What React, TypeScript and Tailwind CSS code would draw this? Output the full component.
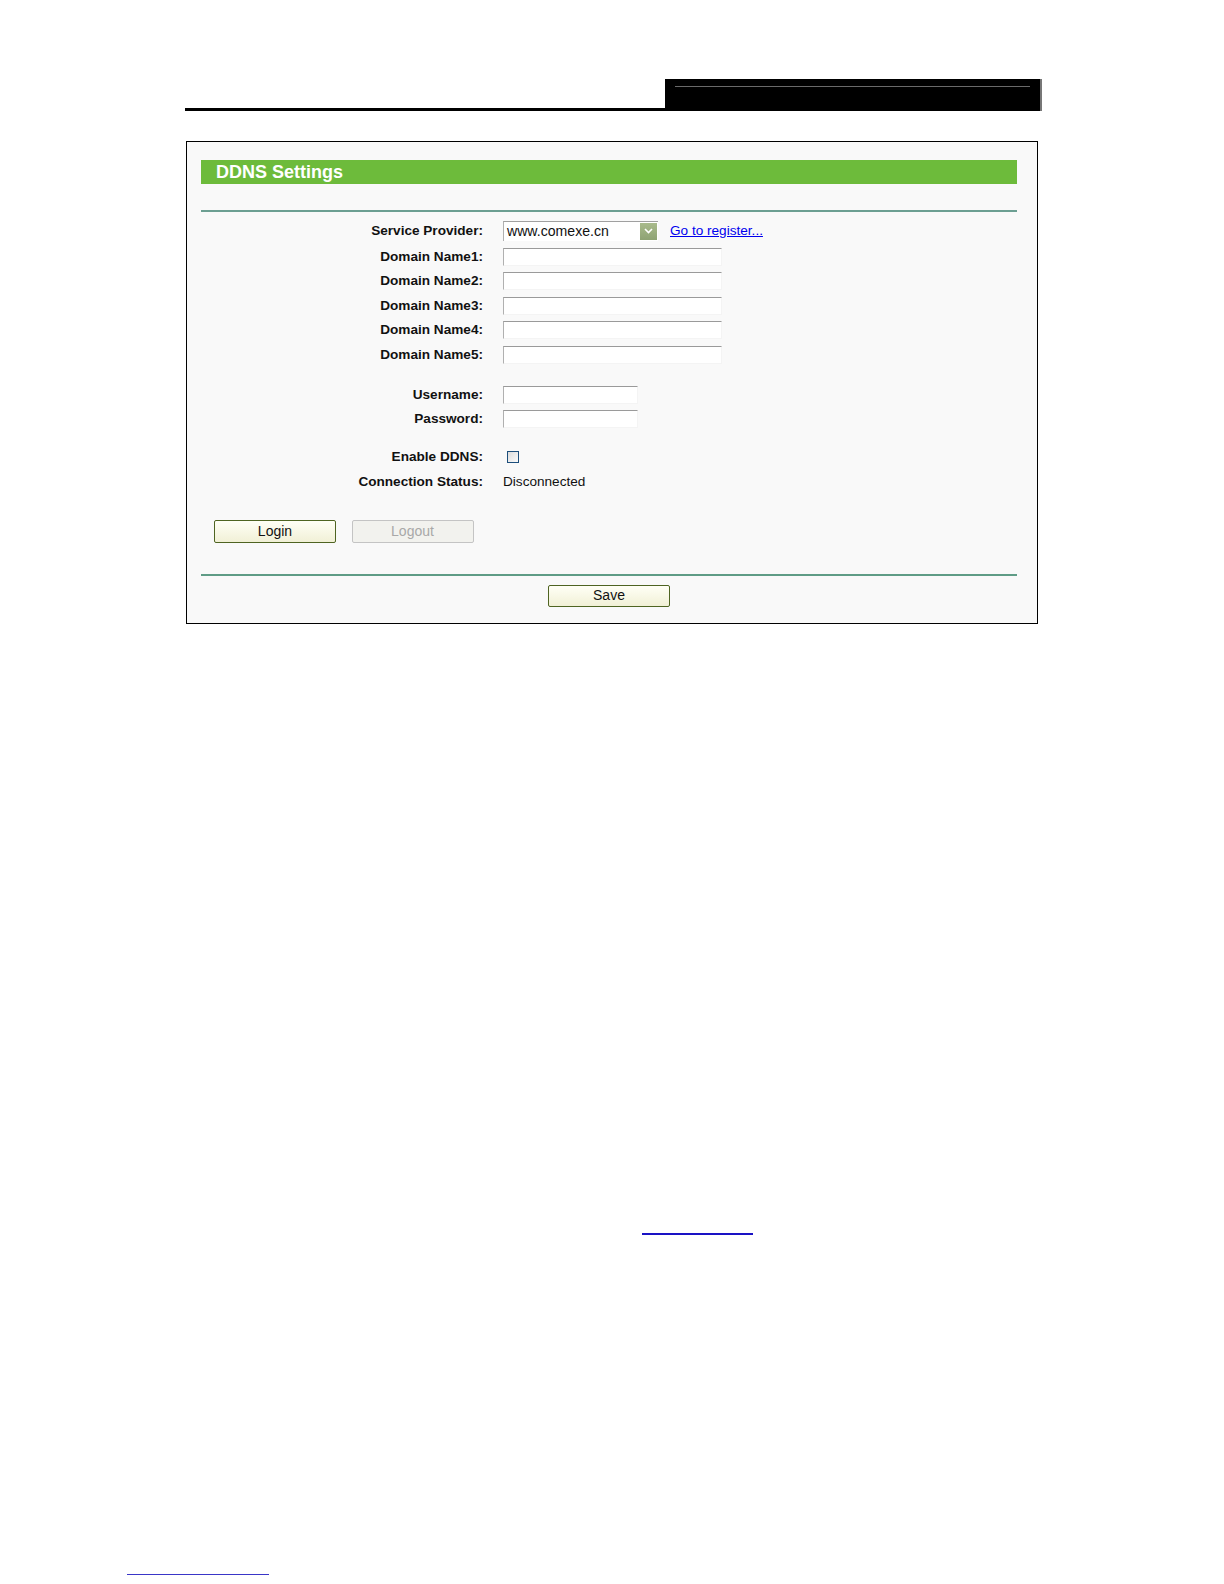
import React from 'react';

const font = { fontFamily: '"Liberation Sans", Arial, sans-serif' };

const Row: React.FC<{ label: string; children?: React.ReactNode; tall?: boolean }> = ({ label, children, tall }) => (
  <div className={`flex items-center ${tall ? 'h-[27px]' : 'h-[24.5px]'}`}>
    <div className="w-[282px] shrink-0 text-right text-[13.6px] font-bold text-[#111]">{label}</div>
    <div className="ml-[20px] flex items-center">{children}</div>
  </div>
);

const TextBox: React.FC<{ w: string }> = ({ w }) => (
  <div className={`${w} h-[18px] border-t border-l border-t-[#9a9a9a] border-l-[#b0b0b0] border-r border-b border-r-[#f4f4f4] border-b-[#f4f4f4] bg-white`} />
);

const Btn: React.FC<{ label: string; disabled?: boolean }> = ({ label, disabled }) =>
  disabled ? (
    <div className="w-[122px] h-[22.5px] flex items-center justify-center rounded-[2px] border border-[#c4c4c4] bg-[#f2f2ee] text-[14px] text-[#a8a8a8]">
      {label}
    </div>
  ) : (
    <div className="w-[122px] h-[22.5px] flex items-center justify-center rounded-[2px] border border-[#4f6422] bg-gradient-to-b from-[#fffff6] to-[#f1f0d6] text-[14px] text-[#111]">
      {label}
    </div>
  );

const App: React.FC = () => {
  return (
    <div className="w-[1224px] h-[1584px] bg-white overflow-hidden" style={font}>
      {/* page header */}
      <div className="ml-[185px] mt-[79px] w-[857px] flex items-end">
        <div className="flex-1 h-[3px] bg-black" />
        <div className="w-[377px] h-[32px] bg-black border-r-2 border-r-[#777] pt-[7px] px-[10px]">
          <div className="h-[1px] bg-[#6a6a6a]" />
        </div>
      </div>

      {/* DDNS panel */}
      <div className="ml-[186px] mt-[30px] w-[852px] border border-black bg-[#f9f9f9] pl-[14px] pr-[20px] pt-[18px] pb-[16px]">
        <div className="h-[24px] bg-[#6dbb3b] flex items-center pl-[15px] text-[18px] font-bold text-white">DDNS Settings</div>
        <div className="mt-[26px] h-[2px] bg-[#6c9f92]" />

        <div className="mt-[5.5px]">
          <Row label="Service Provider:" tall>
            <div className="w-[155px] h-[20px] flex items-center border-t border-l border-t-[#a0a0a0] border-l-[#b0b0b0] bg-white">
              <span className="flex-1 pl-[3px] text-[14.1px] text-[#111]">www.comexe.cn</span>
              <span className="w-[17px] h-[17px] mr-[1px] flex items-center justify-center bg-gradient-to-b from-[#a9bb8c] to-[#8ea273]">
                <svg width="9" height="6" viewBox="0 0 9 6">
                  <path d="M1 1 L4.5 4.5 L8 1" stroke="white" strokeWidth="1.6" fill="none" />
                </svg>
              </span>
            </div>
            <span className="ml-[12px] text-[13.6px] text-[#0000ee] underline">Go to register...</span>
          </Row>
          <Row label="Domain Name1:"><TextBox w="w-[219px]" /></Row>
          <Row label="Domain Name2:"><TextBox w="w-[219px]" /></Row>
          <Row label="Domain Name3:"><TextBox w="w-[219px]" /></Row>
          <Row label="Domain Name4:"><TextBox w="w-[219px]" /></Row>
          <Row label="Domain Name5:"><TextBox w="w-[219px]" /></Row>

          <div className="h-[15.5px]" />
          <Row label="Username:"><TextBox w="w-[135px]" /></Row>
          <Row label="Password:"><TextBox w="w-[135px]" /></Row>

          <div className="h-[13.6px]" />
          <Row label="Enable DDNS:">
            <span className="ml-[4px] w-[12px] h-[12px] border border-[#1d4f7c] bg-gradient-to-br from-[#dcdcdc] to-[#fbfbfb]" />
          </Row>
          <Row label="Connection Status:">
            <span className="text-[13.6px] text-[#111]">Disconnected</span>
          </Row>
        </div>

        <div className="mt-[26px] ml-[13px] flex gap-[15.5px]">
          <Btn label="Login" />
          <Btn label="Logout" disabled />
        </div>

        <div className="mt-[31px] h-[2px] bg-[#5f9c86]" />
        <div className="mt-[9px] flex justify-center">
          <Btn label="Save" />
        </div>
      </div>

      {/* underlined links further down the page */}
      <div className="ml-[642px] mt-[609px] w-[111px] h-[2px] bg-[#1a12c4]" />
      <div className="ml-[127px] mt-[339px] w-[142px] h-[1px] bg-[#3a36c8]" />
    </div>
  );
};

export default App;
